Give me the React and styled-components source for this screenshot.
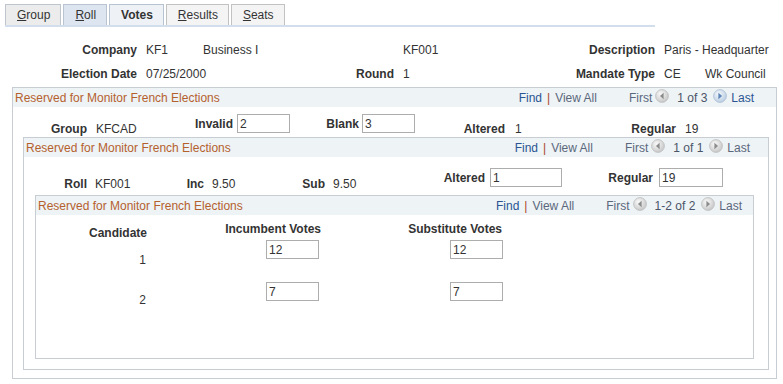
import React from 'react';
import styled, { createGlobalStyle } from 'styled-components';

const Global = createGlobalStyle`
  html, body { margin: 0; padding: 0; background: #fff; }
  body {
    font-family: "Liberation Sans", Arial, sans-serif;
    font-size: 12px;
    color: #333;
  }
  * { box-sizing: border-box; }
`;

const Page = styled.div`
  width: 783px;
  height: 384px;
  overflow: hidden;
`;

const Tabs = styled.div`
  display: flex;
  align-items: flex-end;
  gap: 2px;
  margin: 4px 0 0 5px;
  width: 650px;
  height: 23px;
  border-bottom: 2px solid #d2deeb;
`;

const Tab = styled.div`
  height: 21px;
  padding: 0 10px 0 11px;
  line-height: 20px;
  border: 1px solid ${(p) => p.$border};
  border-bottom: none;
  background: ${(p) => p.$bg};
  font-weight: ${(p) => (p.$active ? 'bold' : 'normal')};
  color: #333;
  white-space: nowrap;
  u { text-decoration: underline; }
`;

const InfoGrid = styled.div`
  display: grid;
  grid-template-columns: 146px 57px 200px 97px 164px 41px 1fr;
  grid-auto-rows: 24px;
  align-items: center;
  margin-top: 11px;
  white-space: nowrap;
`;

const InfoLabel = styled.div`
  font-weight: bold;
  text-align: right;
  padding-right: 9px;
`;

const InfoValue = styled.div`
  grid-column: span ${(p) => p.$span || 1};
`;

const Box = styled.div`
  border: 1px solid #c8cdd3;
  margin: ${(p) => p.$m};
  height: ${(p) => p.$h}px;
  width: ${(p) => (p.$w ? `${p.$w}px` : 'auto')};
`;

const BoxHead = styled.div`
  display: flex;
  align-items: center;
  justify-content: space-between;
  height: 19px;
  background: #eef3f6;
  padding: 0 ${(p) => p.$pr}px 0 2px;
  white-space: nowrap;
`;

const BoxTitle = styled.span`
  color: #b5612e;
`;

const Nav = styled.div`
  display: flex;
  align-items: center;
`;

const NavLink = styled.span`
  color: ${(p) => (p.$active ? '#2a5592' : '#5b687c')};
`;

const Pipe = styled.span`
  color: #a8452b;
  margin: 0 5px;
`;

const Counter = styled.span`
  color: #4a5568;
  margin: 0 4px;
`;

const NavGroup = styled.div`
  display: flex;
  align-items: center;
  margin-left: 32px;
`;

const IconWrap = styled.span`
  display: inline-flex;
  margin: 0 ${(p) => p.$mr}px 0 ${(p) => p.$ml}px;
  position: relative;
  top: -2px;
`;

const NavIcon = ({ dir, active }) => {
  const id = `g-${dir}-${active ? 'a' : 'd'}`;
  return (
    <svg width="14" height="14" viewBox="0 0 14 14">
      <defs>
        <radialGradient id={id} cx="40%" cy="35%" r="70%">
          <stop offset="0%" stopColor={active ? '#f4f8fc' : '#fafafa'} />
          <stop offset="100%" stopColor={active ? '#b8cbe0' : '#c4c4c4'} />
        </radialGradient>
      </defs>
      <circle cx="7" cy="7" r="6.4" fill={`url(#${id})`} stroke={active ? '#a9bcd2' : '#bdbdbd'} strokeWidth="0.8" />
      <path
        d={dir === 'left' ? 'M8.6 3.8 L4.9 7 L8.6 10.2 Z' : 'M5.4 3.8 L9.1 7 L5.4 10.2 Z'}
        fill={active ? '#5d86b8' : '#8c8c8c'}
      />
    </svg>
  );
};

const FieldRow = styled.div`
  display: flex;
  align-items: flex-start;
  height: ${(p) => p.$h}px;
  padding-top: ${(p) => p.$pt}px;
  white-space: nowrap;
`;

const Field = styled.div`
  display: flex;
  align-items: center;
  flex: none;
  width: ${(p) => (p.$w ? `${p.$w}px` : 'auto')};
  height: 19px;
  margin-top: ${(p) => p.$drop || 0}px;
`;

const FieldLabel = styled.span`
  flex: none;
  font-weight: bold;
  text-align: right;
  width: ${(p) => p.$w}px;
  margin-right: ${(p) => p.$gap}px;
`;

const TextInput = styled.input`
  width: ${(p) => p.$w}px;
  height: 19px;
  border: 1px solid #adadad;
  padding: 0 0 0 2px;
  margin: 0;
  font-family: "Liberation Sans", Arial, sans-serif;
  font-size: 12px;
  color: #333;
  background: #fff;
  outline: none;
`;

const VoteGrid = styled.div`
  display: grid;
  grid-template-columns: 111px 174px 182px;
  grid-template-rows: 25px 42px 42px;
  white-space: nowrap;
`;

const ColHead = styled.div`
  font-weight: bold;
  text-align: right;
  line-height: 14px;
  padding-top: ${(p) => p.$pt}px;
  padding-right: ${(p) => p.$pr || 0}px;
`;

const NumCell = styled.div`
  text-align: right;
  line-height: 14px;
  color: #333;
  padding-top: ${(p) => p.$pt}px;
  padding-right: 1px;
`;

const InputCell = styled.div`
  display: flex;
  justify-content: flex-end;
  align-items: flex-start;
  padding-right: ${(p) => p.$pr || 0}px;
`;

const Header = ({ pr, counter, lastActive }) => (
  <BoxHead $pr={pr}>
    <BoxTitle>Reserved for Monitor French Elections</BoxTitle>
    <Nav>
      <NavLink $active>Find</NavLink>
      <Pipe>|</Pipe>
      <NavLink>View All</NavLink>
      <NavGroup>
        <NavLink>First</NavLink>
        <IconWrap $ml={3} $mr={4}><NavIcon dir="left" /></IconWrap>
        <Counter>{counter}</Counter>
        <IconWrap $ml={2} $mr={4}><NavIcon dir="right" active={lastActive} /></IconWrap>
        <NavLink $active={lastActive}>Last</NavLink>
      </NavGroup>
    </Nav>
  </BoxHead>
);

const tabs = [
  { key: 'g', u: 'G', rest: 'roup', bg: '#ececec', border: '#bfc5cc' },
  { key: 'r', u: 'R', rest: 'oll', bg: '#dde6f0', border: '#b9c4d0' },
  { key: 'v', label: 'Votes', bg: '#eef2f7', border: '#b7c3d0', active: true },
  { key: 'res', u: 'R', rest: 'esults', bg: '#f4f4f4', border: '#c2c2c2' },
  { key: 's', u: 'S', rest: 'eats', bg: '#f4f4f4', border: '#c2c2c2' },
];

const candidates = [
  { n: '1', inc: '12', sub: '12', pt: 13 },
  { n: '2', inc: '7', sub: '7', pt: 11 },
];

export default function App() {
  return (
    <Page>
      <Global />
      <Tabs>
        {tabs.map((t) => (
          <Tab key={t.key} $bg={t.bg} $border={t.border} $active={t.active}>
            {t.active ? t.label : (<><u>{t.u}</u>{t.rest}</>)}
          </Tab>
        ))}
      </Tabs>

      <InfoGrid>
        <InfoLabel>Company</InfoLabel>
        <InfoValue>KF1</InfoValue>
        <InfoValue>Business I</InfoValue>
        <InfoValue>KF001</InfoValue>
        <InfoLabel>Description</InfoLabel>
        <InfoValue $span={2}>Paris - Headquarter</InfoValue>

        <InfoLabel>Election Date</InfoLabel>
        <InfoValue>07/25/2000</InfoValue>
        <InfoLabel>Round</InfoLabel>
        <InfoValue>1</InfoValue>
        <InfoLabel>Mandate Type</InfoLabel>
        <InfoValue>CE</InfoValue>
        <InfoValue>Wk Council</InfoValue>
      </InfoGrid>

      <Box $m="1px 0 0 12px" $w={765} $h={292}>
        <Header pr={22} counter="1 of 3" lastActive />
        <FieldRow $h={30} $pt={7}>
          <Field $w={167} $drop={5}>
            <FieldLabel $w={74} $gap={9}>Group</FieldLabel>KFCAD
          </Field>
          <Field $w={110}>
            <FieldLabel $w={53} $gap={4}>Invalid</FieldLabel>
            <TextInput $w={53} readOnly value="2" />
          </Field>
          <Field $w={125}>
            <FieldLabel $w={69} $gap={3}>Blank</FieldLabel>
            <TextInput $w={53} readOnly value="3" />
          </Field>
          <Field $w={205} $drop={5}>
            <FieldLabel $w={90} $gap={10}>Altered</FieldLabel>1
          </Field>
          <Field $drop={5}>
            <FieldLabel $w={56} $gap={9}>Regular</FieldLabel>19
          </Field>
        </FieldRow>

        <Box $m="0 7px 0 10px" $h={233}>
          <Header pr={18} counter="1 of 1" />
          <FieldRow $h={38} $pt={11}>
            <Field $w={126} $drop={6}>
              <FieldLabel $w={63} $gap={8}>Roll</FieldLabel>KF001
            </Field>
            <Field $w={120} $drop={6}>
              <FieldLabel $w={54} $gap={8}>Inc</FieldLabel>9.50
            </Field>
            <Field $w={150} $drop={6}>
              <FieldLabel $w={55} $gap={8}>Sub</FieldLabel>9.50
            </Field>
            <Field $w={142}>
              <FieldLabel $w={65} $gap={5}>Altered</FieldLabel>
              <TextInput $w={72} readOnly value="1" />
            </Field>
            <Field>
              <FieldLabel $w={91} $gap={6}>Regular</FieldLabel>
              <TextInput $w={64} readOnly value="19" />
            </Field>
          </FieldRow>

          <Box $m="0 14px 0 11px" $h={164}>
            <Header pr={11} counter="1-2 of 2" />
            <VoteGrid>
              <ColHead $pt={11}>Candidate</ColHead>
              <ColHead $pt={7}>Incumbent Votes</ColHead>
              <ColHead $pt={7} $pr={1}>Substitute Votes</ColHead>
              {candidates.map((c) => (
                <React.Fragment key={c.n}>
                  <NumCell $pt={c.pt}>{c.n}</NumCell>
                  <InputCell $pr={2}><TextInput $w={53} readOnly value={c.inc} /></InputCell>
                  <InputCell><TextInput $w={53} readOnly value={c.sub} /></InputCell>
                </React.Fragment>
              ))}
            </VoteGrid>
          </Box>
        </Box>
      </Box>
    </Page>
  );
}
